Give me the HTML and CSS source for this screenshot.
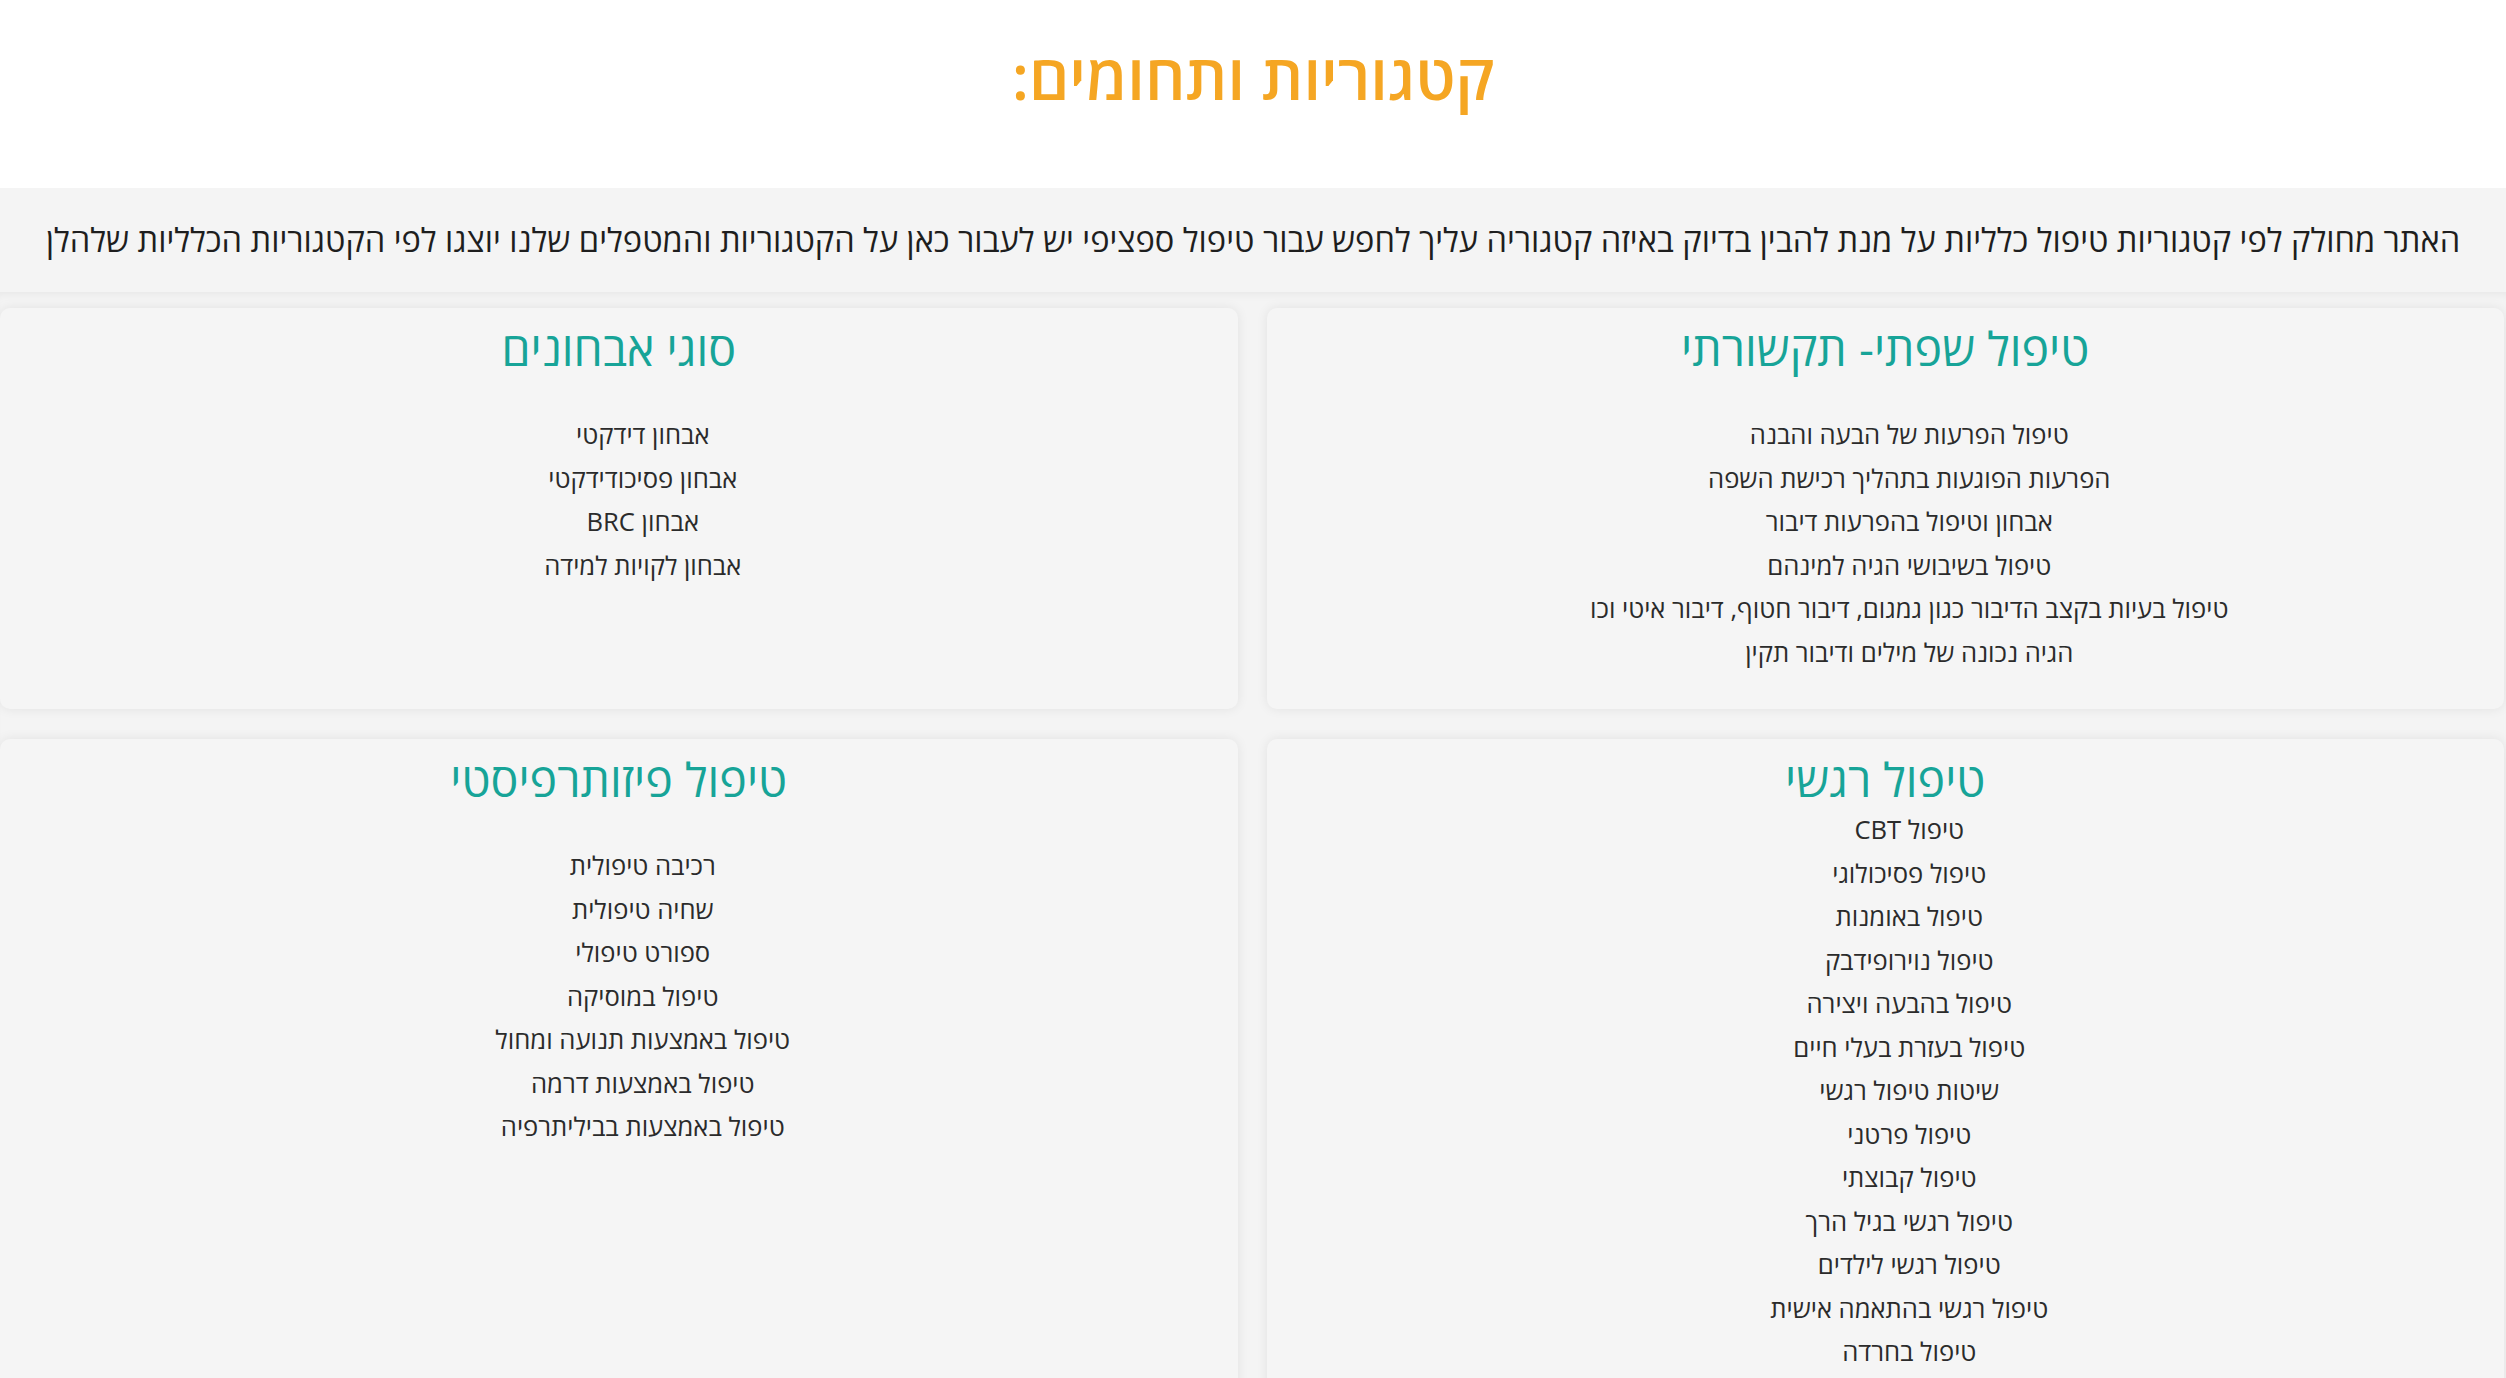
FILE: index.html
```html
<!DOCTYPE html>
<html lang="he" dir="rtl">
<head>
<meta charset="utf-8">
<title>קטגוריות ותחומים</title>
<link rel="stylesheet" href="styles.css">
</head>
<body>
<header class="top">
  <h1 class="title">קטגוריות ותחומים:</h1>
</header>
<section class="intro">
  <p class="intro-text">האתר מחולק לפי קטגוריות טיפול כלליות על מנת להבין בדיוק באיזה קטגוריה עליך לחפש עבור טיפול ספציפי יש לעבור כאן על הקטגוריות והמטפלים שלנו יוצגו לפי הקטגוריות הכלליות שלהלן</p>
</section>
<main class="grid">
  <div class="card">
    <h2 class="card-title">טיפול שפתי- תקשורתי</h2>
    <ul class="list spaced">
      <li>טיפול הפרעות של הבעה והבנה</li>
      <li>הפרעות הפוגעות בתהליך רכישת השפה</li>
      <li>אבחון וטיפול בהפרעות דיבור</li>
      <li>טיפול בשיבושי הגיה למינהם</li>
      <li>טיפול בעיות בקצב הדיבור כגון גמגום, דיבור חטוף, דיבור איטי וכו</li>
      <li>הגיה נכונה של מילים ודיבור תקין</li>
    </ul>
  </div>
  <div class="card">
    <h2 class="card-title">סוגי אבחונים</h2>
    <ul class="list spaced">
      <li>אבחון דידקטי</li>
      <li>אבחון פסיכודידקטי</li>
      <li>אבחון BRC</li>
      <li>אבחון לקויות למידה</li>
    </ul>
  </div>
  <div class="card">
    <h2 class="card-title">טיפול רגשי</h2>
    <ul class="list">
      <li>טיפול CBT</li>
      <li>טיפול פסיכולוגי</li>
      <li>טיפול באומנות</li>
      <li>טיפול נוירופידבק</li>
      <li>טיפול בהבעה ויצירה</li>
      <li>טיפול בעזרת בעלי חיים</li>
      <li>שיטות טיפול רגשי</li>
      <li>טיפול פרטני</li>
      <li>טיפול קבוצתי</li>
      <li>טיפול רגשי בגיל הרך</li>
      <li>טיפול רגשי לילדים</li>
      <li>טיפול רגשי בהתאמה אישית</li>
      <li>טיפול בחרדה</li>
      <li>טיפול בדיכאון</li>
    </ul>
  </div>
  <div class="card">
    <h2 class="card-title">טיפול פיזותרפיסטי</h2>
    <ul class="list spaced">
      <li>רכיבה טיפולית</li>
      <li>שחיה טיפולית</li>
      <li>ספורט טיפולי</li>
      <li>טיפול במוסיקה</li>
      <li>טיפול באמצעות תנועה ומחול</li>
      <li>טיפול באמצעות דרמה</li>
      <li>טיפול באמצעות בביליתרפיה</li>
    </ul>
  </div>
</main>
</body>
</html>
```

FILE: styles.css
```css
html, body {
  margin: 0;
  padding: 0;
}

body {
  direction: rtl;
  font-family: "Open Sans", "DejaVu Sans", sans-serif;
  background: #f4f4f4;
  color: #2b2b2b;
}

.top {
  background: #ffffff;
  height: 188px;
  display: flex;
  align-items: center;
  justify-content: center;
}

.title {
  margin: 0;
  margin-top: -36px;
  font-size: 63px;
  font-weight: 600;
  color: #f5a623;
  line-height: 80px;
}

.intro {
  background: #f4f4f4;
  height: 104px;
  display: flex;
  align-items: center;
  justify-content: center;
  position: relative;
  z-index: 1;
}

.intro-text {
  margin: 0;
  font-size: 32.6px;
  color: #1e1e1e;
  line-height: 1.3;
  text-align: center;
}

.grid {
  display: grid;
  grid-template-columns: 1fr 1fr;
  gap: 30px 29px;
  padding: 16px 2px 0 0;
  box-shadow: inset 0 8px 10px -6px rgba(0, 0, 0, 0.06);
}

.card {
  background: #f5f5f5;
  border-radius: 10px;
  box-shadow: 0 0 12px rgba(0, 0, 0, 0.08);
  padding: 16px 20px 35px;
  text-align: center;
}

.card-title {
  margin: 0;
  font-size: 46.5px;
  font-weight: 500;
  color: #17a498;
  line-height: 48px;
}

.list {
  list-style: none;
  margin: 5px 0 0;
  padding: 0 0 0 48px;
  font-size: 25.6px;
  line-height: 43.5px;
  color: #2b2b2b;
}

.list.spaced {
  margin-top: 41px;
}
```
